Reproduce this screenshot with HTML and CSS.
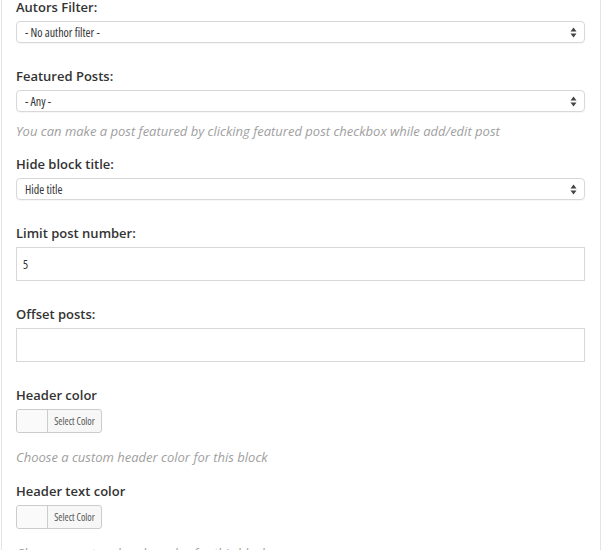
FILE: index.html
```html
<!DOCTYPE html>
<html>
<head>
<meta charset="utf-8">
<link rel="stylesheet" href="styles.css">
</head>
<body>
<div class="panel">
  <div class="field">
    <div class="label">Autors Filter:</div>
    <div class="select"><span class="val">- No author filter -</span>
      <svg class="arrows" width="7" height="11" viewBox="0 0 7 11"><path d="M3.5 0.5L6.5 4.5H0.5Z M3.5 10.5L6.5 6.5H0.5Z" fill="#444"/></svg>
    </div>
  </div>
  <div class="field">
    <div class="label">Featured Posts:</div>
    <div class="select"><span class="val">- Any -</span>
      <svg class="arrows" width="7" height="11" viewBox="0 0 7 11"><path d="M3.5 0.5L6.5 4.5H0.5Z M3.5 10.5L6.5 6.5H0.5Z" fill="#444"/></svg>
    </div>
    <div class="help help-select">You can make a post featured by clicking featured post checkbox while add/edit post</div>
  </div>
  <div class="field">
    <div class="label">Hide block title:</div>
    <div class="select"><span class="val">Hide title</span>
      <svg class="arrows" width="7" height="11" viewBox="0 0 7 11"><path d="M3.5 0.5L6.5 4.5H0.5Z M3.5 10.5L6.5 6.5H0.5Z" fill="#444"/></svg>
    </div>
  </div>
  <div class="field">
    <div class="label">Limit post number:</div>
    <div class="input"><span class="val">5</span></div>
  </div>
  <div class="field">
    <div class="label">Offset posts:</div>
    <div class="input"></div>
  </div>
  <div class="field">
    <div class="label">Header color</div>
    <div class="colorbtn"><span class="swatch"></span><span class="cbtext">Select Color</span></div>
    <div class="help help-color">Choose a custom header color for this block</div>
  </div>
  <div class="field">
    <div class="label">Header text color</div>
    <div class="colorbtn"><span class="swatch"></span><span class="cbtext">Select Color</span></div>
    <div class="help help-color">Choose a custom header color for this block</div>
  </div>
</div>
</body>
</html>
```
FILE: styles.css
```css
html, body {
  margin: 0;
  padding: 0;
  background: #fff;
  overflow: hidden;
}
body {
  font-family: "Open Sans", "Liberation Sans", sans-serif;
  color: #333;
}
.panel {
  margin-left: 1px;
  width: 569px;
  border-left: 1px solid #e4e4e4;
  border-right: 1px solid #e4e4e4;
  padding: 0 15px 40px 14px;
  margin-top: -2px;
  min-height: 600px;
}
.field {
  margin-bottom: 24px;
}
.label {
  font-size: 13px;
  font-weight: 600;
  line-height: 18px;
  margin-bottom: 5px;
  color: #333;
}
.select {
  height: 20px;
  border: 1px solid #d8d8d8;
  border-radius: 4px;
  display: flex;
  align-items: center;
  justify-content: space-between;
  padding: 0 7px 0 8px;
  box-shadow: 0 1px 1px rgba(0,0,0,0.04);
}
.val {
  font-size: 12px;
  font-stretch: 75%;
  color: #333;
}
.arrows {
  display: block;
}
.input {
  height: 32px;
  border: 1px solid #d8d8d8;
  display: flex;
  align-items: center;
  padding: 0 6px;
}
.help {
  font-size: 13px;
  font-style: italic;
  color: #a0a0a0;
  line-height: 18px;
}
.help-select {
  margin-top: 10px;
  margin-bottom: -9px;
}
.help-color {
  margin-top: 15px;
  margin-bottom: -8px;
}
.colorbtn {
  width: 84px;
  height: 22px;
  border: 1px solid #ccc;
  border-radius: 3px;
  display: flex;
  background: #f7f7f7;
}
.swatch {
  width: 30px;
  border-right: 1px solid #ccc;
  background: #fafafa;
  border-radius: 3px 0 0 3px;
}
.cbtext {
  flex: 1;
  text-align: center;
  font-size: 10px;
  font-stretch: 75%;
  line-height: 22px;
  color: #555;
}
```
